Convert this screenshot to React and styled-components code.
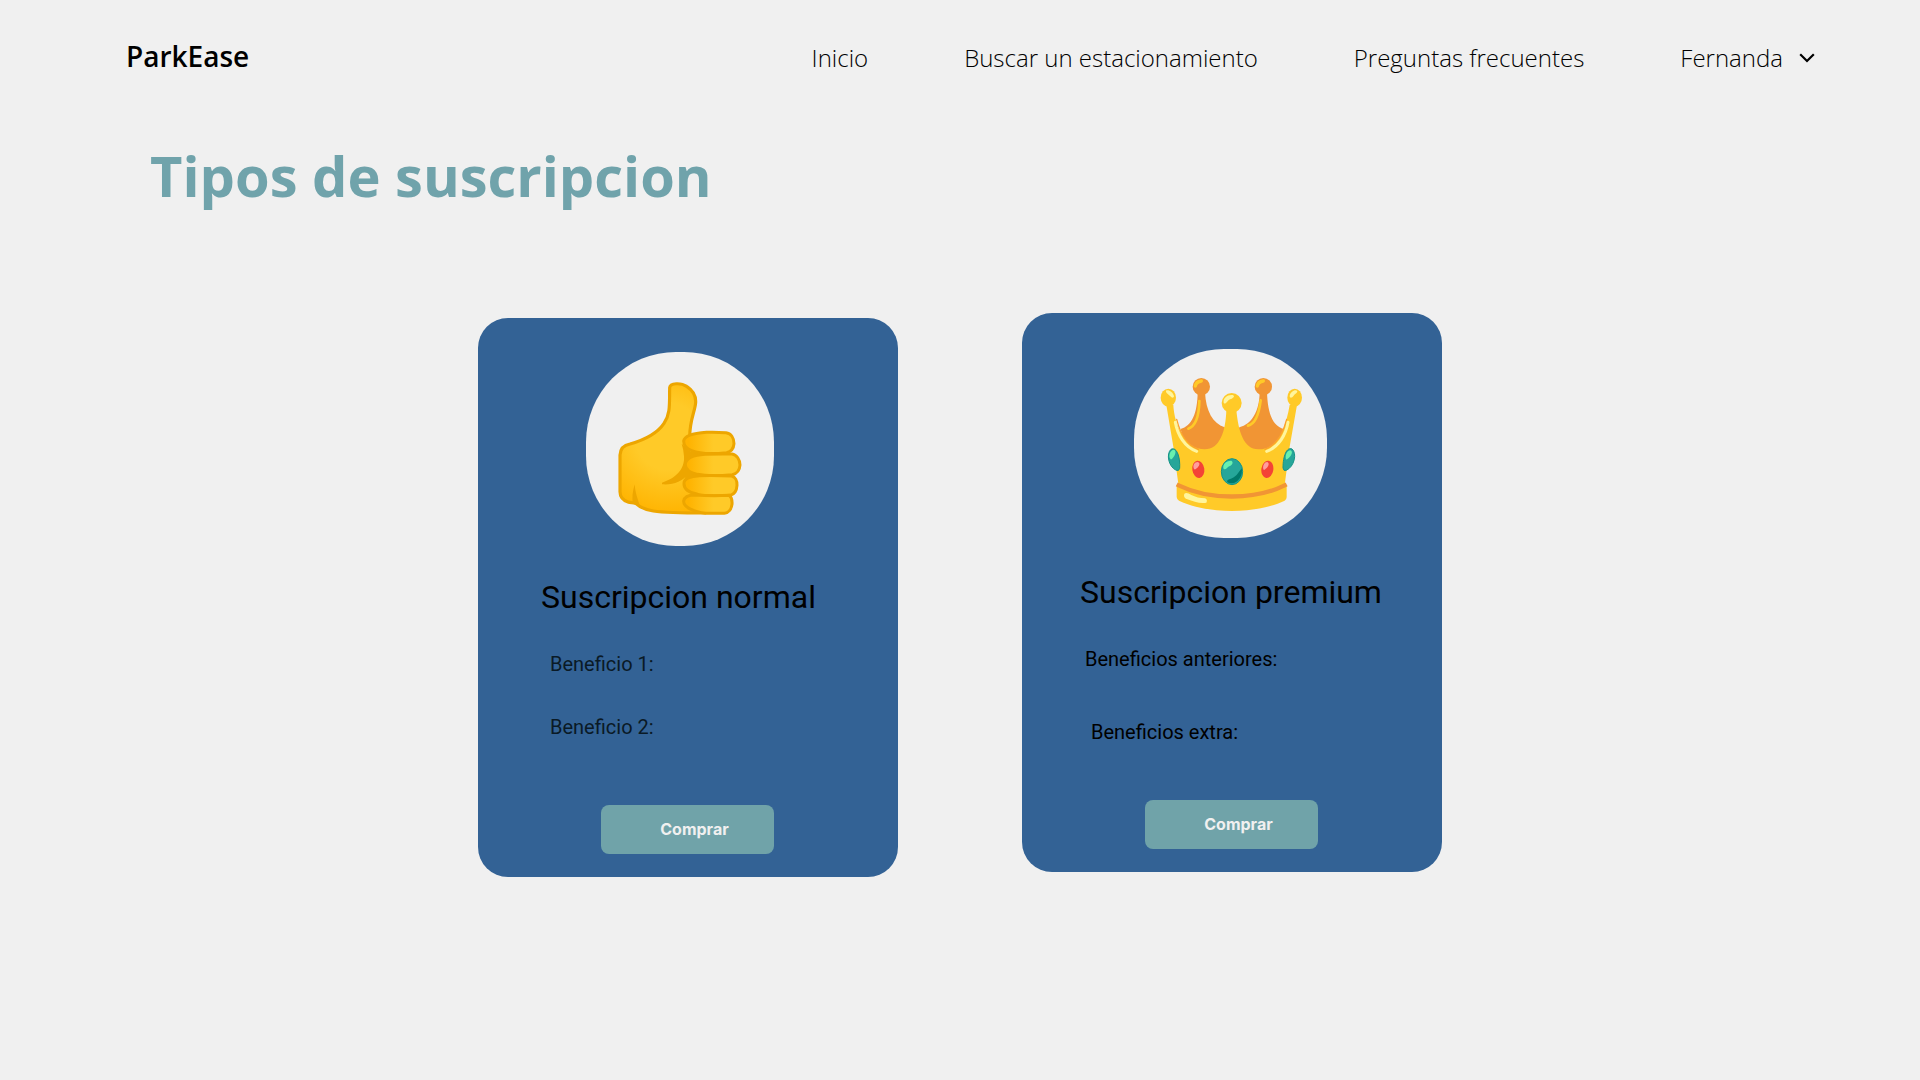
import React from 'react';
import styled, { createGlobalStyle } from 'styled-components';

const GlobalStyle = createGlobalStyle`
  *, *::before, *::after { box-sizing: border-box; }
  body {
    margin: 0;
    background: #f0f0f0;
    color: #000;
    font-family: 'Open Sans', 'Noto Sans', sans-serif;
  }
`;

const Page = styled.div`
  min-height: 100vh;
`;

const Header = styled.header`
  display: flex;
  align-items: baseline;
  justify-content: space-between;
  padding: 37px 105px 0 126px;
`;

const Brand = styled.a`
  color: #000;
  font-size: 28px;
  font-weight: 600;
  line-height: 38px;
  text-decoration: none;
`;

const Nav = styled.nav`
  display: flex;
  align-items: baseline;
  gap: 96px;
`;

const NavLink = styled.a`
  color: #000;
  font-size: 24px;
  font-weight: 300;
  line-height: 32px;
  text-decoration: none;
`;

const UserButton = styled.button`
  display: flex;
  align-items: center;
  gap: 16px;
  padding: 0;
  border: 0;
  background: none;
  color: #000;
  font: 300 24px/32px 'Open Sans', 'Noto Sans', sans-serif;
  cursor: pointer;
`;

const Heading = styled.h1`
  margin: 0;
  padding: 62px 150px 0;
  color: #70a3ab;
  font-size: 56px;
  font-weight: 700;
  line-height: 76px;
`;

const Plans = styled.main`
  display: flex;
  flex-wrap: wrap;
  align-items: flex-start;
  justify-content: center;
  gap: 124px;
  padding: 100px 24px;
`;

const Card = styled.article`
  display: flex;
  flex-direction: column;
  width: 420px;
  min-height: 559px;
  margin-top: ${({ $drop }) => $drop}px;
  padding: 34px 0 23px;
  border-radius: 30px;
  background: #336295;
  font-family: Roboto, 'Liberation Sans', sans-serif;
`;

const AvatarRow = styled.div`
  display: flex;
  align-items: center;
  justify-content: center;
  height: 193px;
  padding-right: ${({ $inset }) => $inset}px;
`;

const Avatar = styled.div`
  width: ${({ $width }) => $width}px;
  height: ${({ $height }) => $height}px;
  border-radius: 90px;
  background: #f0f0f0;
  overflow: hidden;

  svg {
    display: block;
    width: 100%;
    height: 100%;
  }
`;

const PlanName = styled.h2`
  margin: 32px 0 35px;
  padding-left: ${({ $inset }) => $inset}px;
  font-size: 32px;
  font-weight: 400;
  line-height: 40px;
`;

const Benefits = styled.ul`
  display: flex;
  flex-direction: column;
  gap: ${({ $gap }) => $gap}px;
  margin: 0;
  padding: 0 0 0 ${({ $inset }) => $inset}px;
  color: ${({ $color }) => $color};
  font-size: 20px;
  line-height: 24px;
  list-style: none;
`;

const Benefit = styled.li`
  padding-left: ${({ $indent }) => $indent || 0}px;
`;

const BuyButton = styled.button`
  width: 173px;
  height: 49px;
  margin: auto 0 0 123px;
  padding: 0 0 1px 14px;
  border: 0;
  border-radius: 8px;
  background: #70a3a9;
  color: #f0f0f0;
  font: 700 16px/24px Inter, Roboto, sans-serif;
  cursor: pointer;
`;

function Chevron() {
  return (
    <svg width="16" height="10" viewBox="0 0 16 10" fill="none" aria-hidden="true">
      <path d="M1.2 1.2 8 8l6.8-6.8" stroke="#000" strokeWidth="2.2" />
    </svg>
  );
}

function ThumbsUp() {
  return (
    <svg viewBox="48 36 564 582" role="img" aria-label="Pulgar arriba">
      <defs>
        <radialGradient id="palm" gradientUnits="userSpaceOnUse" cx="295" cy="290" r="250">
          <stop offset="0.4" stopColor="#ffca28" />
          <stop offset="0.95" stopColor="#ffb300" />
        </radialGradient>
        <linearGradient id="finger" gradientUnits="userSpaceOnUse" x1="355" y1="0" x2="430" y2="0">
          <stop offset="0" stopColor="#ffb300" />
          <stop offset="1" stopColor="#ffca28" />
        </linearGradient>
      </defs>
      <path
        d="M299 143C300 128 334 128 350 139C370 152 378 167 377 187C375 215 360 236 359 290L405 400V519C340 519 284 518 250 513C225 509 211 503 198 491C190 487 182 489 174 486C158 480 150 470 150 455V345C151 326 163 315 180 312C225 299 262 280 282 250C302 221 298 190 299 143Z"
        fill="url(#palm)" stroke="#eda600" strokeWidth="9.5" strokeLinejoin="round"
      />
      <path d="M276 428C315 416 345 389 342 349Q341 330 335 311L360 334 385 340V472L342 425Q342 412 356 402C336 424 309 436 276 433Z" fill="#eda600" />
      <path d="M194 433C188 455 185 474 189 492L209 496C202 473 196 460 194 433Z" fill="#eda600" />
      <g fill="url(#finger)" stroke="#eda600" strokeWidth="9">
        <path d="M410 277C433 276 450 277 468 278C483 280 492 294 492 311C491 325 482 335 470 338C442 341 395 344 365 332C350 326 341 315 341 303C344 285 379 279 410 277Z" />
        <path d="M405 343Q445 341 486 342C500 344 510 359 510 375C509 391 500 401 487 404C450 408 405 408 382 403C358 397 346 386 346 374C347 354 373 345 405 343Z" />
        <path d="M388 407Q439 406 485 408C496 411 502 423 501 436C500 451 492 463 481 466C449 468 407 469 383 463C357 458 342 447 342 431C341 415 362 408 388 407Z" />
        <path d="M374 465Q425 469 478 466C485 472 487 481 486 493C484 508 475 519 463 520H407C370 515 340 502 341 483C343 472 353 465 374 465Z" />
      </g>
    </svg>
  );
}

function Crown() {
  return (
    <svg viewBox="42 57 579 567" role="img" aria-label="Corona">
      <g fill="#f19534">
        <path d="M182 297C215 289 232 251 233 187H255C258 244 278 280 314 292L337 340 358 292C395 283 418 245 419 187H441C443 248 457 289 492 297L470 380H205Z" />
        <ellipse cx="244" cy="170" rx="26" ry="26" />
        <ellipse cx="430" cy="170" rx="26" ry="26" />
      </g>
      <g fill="none" stroke="#ffca28" strokeLinecap="round">
        <path d="M226 168Q228 155 244 153M412 168Q414 155 430 153" strokeWidth="10" />
        <path d="M238 213C237 257 228 288 205 296M422 211C417 252 406 282 384 287" strokeWidth="8" />
      </g>
      <g fill="#ffca28">
        <path d="M139 225H160C163 286 197 358 254 358C300 358 317 303 319 240H349C355 301 370 358 415 358C471 358 496 300 509 225H531L509 350 494 465Q337 532 175 462L160 350Z" />
        <ellipse cx="145" cy="203" rx="23" ry="27" />
        <ellipse cx="335" cy="219" rx="30" ry="30" />
        <ellipse cx="524" cy="203" rx="22" ry="27" />
        <path d="M170 466V501Q170 508 177 512C265 553 406 553 494 512Q500 508 500 501V466Z" />
      </g>
      <path d="M176 466C265 510 404 511 494 466" fill="none" stroke="#f19534" strokeWidth="13" strokeLinecap="square" />
      <g fill="none" stroke="#fba02e" strokeWidth="4" strokeLinecap="round">
        <path d="M170 268C180 308 200 345 235 358M500 268C490 308 470 345 435 358" />
      </g>
      <g fill="none" stroke="#fff59d" strokeWidth="9" strokeLinecap="round">
        <path d="M166 277C172 314 194 351 230 364M504 277C498 314 476 351 440 364" />
      </g>
      <g fill="#fff59d">
        <path d="M138 182C145 178 160 187 162 199C161 205 155 204 151 199C147 193 137 190 138 182Z" />
        <path d="M311 218C309 203 323 193 338 195C347 199 339 205 330 208C322 212 316 227 311 218Z" />
        <path d="M532 183C526 177 510 186 509 199C510 206 517 203 521 197C524 192 532 190 532 183Z" />
        <path d="M192 496C193 485 204 489 214 495C226 501 240 505 255 505Q264 509 259 518C243 522 219 515 202 508Q192 505 192 496Z" />
      </g>
      <g fill="#26a69a" stroke="#149487" strokeWidth="3">
        <path d="M153 358C169 349 181 378 179 415Q177 424 169 421C145 411 138 371 153 358Z" />
        <path d="M516 357C500 350 489 378 489 414Q491 425 499 421C523 410 532 370 516 357Z" />
        <ellipse cx="336" cy="425" rx="32" ry="39" />
      </g>
      <path d="M365 415C370 438 353 461 334 460C320 459 317 452 328 448C347 444 355 428 365 415Z" fill="#00796b" />
      <g fill="#69f0ae">
        <path d="M152 388C144 378 150 362 160 359C170 359 167 374 160 382Q156 389 152 388Z" />
        <path d="M498 388C495 375 501 362 511 361C520 363 515 377 507 383Q501 389 498 388Z" />
        <path d="M311 417C306 403 319 391 334 392C343 397 334 408 325 410Q315 421 311 417Z" />
      </g>
      <g fill="#f44336">
        <ellipse cx="235" cy="418" rx="18" ry="26" transform="rotate(-8 235 418)" />
        <ellipse cx="442" cy="418" rx="18" ry="26" transform="rotate(8 442 418)" />
      </g>
      <g fill="#ff9e9e">
        <path d="M222 417C217 405 224 396 233 396C243 398 237 410 231 414Q225 421 222 417Z" />
        <path d="M430 418C427 405 435 395 442 396C451 400 443 413 437 416Q432 422 430 418Z" />
      </g>
    </svg>
  );
}

const plans = [
  {
    name: 'Suscripcion normal',
    icon: <ThumbsUp />,
    drop: 5,
    avatar: { width: 188, height: 194, inset: 16 },
    nameInset: 63,
    list: { inset: 72, gap: 39, color: '#0a1a26' },
    benefits: [{ text: 'Beneficio 1:' }, { text: 'Beneficio 2:' }],
  },
  {
    name: 'Suscripcion premium',
    icon: <Crown />,
    drop: 0,
    avatar: { width: 193, height: 189, inset: 3 },
    nameInset: 58,
    list: { inset: 63, gap: 49, color: '#000' },
    benefits: [{ text: 'Beneficios anteriores:' }, { text: 'Beneficios extra:', indent: 6 }],
  },
];

export default function App() {
  return (
    <Page>
      <GlobalStyle />
      <Header>
        <Brand href="#">ParkEase</Brand>
        <Nav>
          <NavLink href="#inicio">Inicio</NavLink>
          <NavLink href="#buscar">Buscar un estacionamiento</NavLink>
          <NavLink href="#preguntas">Preguntas frecuentes</NavLink>
          <UserButton type="button">
            Fernanda
            <Chevron />
          </UserButton>
        </Nav>
      </Header>
      <Heading>Tipos de suscripcion</Heading>
      <Plans>
        {plans.map((plan) => (
          <Card key={plan.name} $drop={plan.drop}>
            <AvatarRow $inset={plan.avatar.inset}>
              <Avatar $width={plan.avatar.width} $height={plan.avatar.height}>
                {plan.icon}
              </Avatar>
            </AvatarRow>
            <PlanName $inset={plan.nameInset}>{plan.name}</PlanName>
            <Benefits $inset={plan.list.inset} $gap={plan.list.gap} $color={plan.list.color}>
              {plan.benefits.map((benefit) => (
                <Benefit key={benefit.text} $indent={benefit.indent}>
                  {benefit.text}
                </Benefit>
              ))}
            </Benefits>
            <BuyButton type="button">Comprar</BuyButton>
          </Card>
        ))}
      </Plans>
    </Page>
  );
}
